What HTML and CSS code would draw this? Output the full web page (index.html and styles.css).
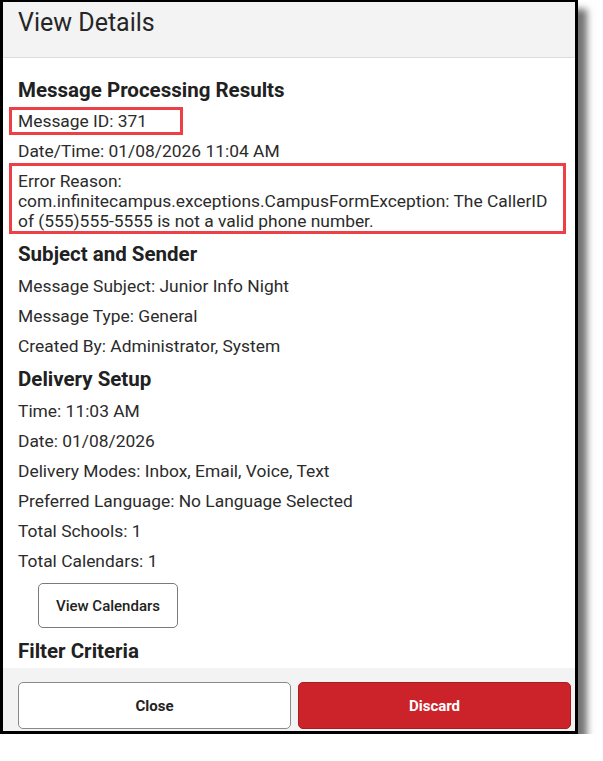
FILE: index.html
```html
<!DOCTYPE html>
<html lang="en">
<head>
<meta charset="utf-8">
<title>View Details</title>
<link rel="stylesheet" href="styles.css">
</head>
<body>
<div class="frame">
  <div class="header"><h1 class="title">View Details</h1></div>
  <div class="content">
    <h2 class="heading h-first">Message Processing Results</h2>
    <div class="mark mark-id"><div class="row">Message ID: 371</div></div>
    <div class="row r-date">Date/Time: 01/08/2026 11:04 AM</div>
    <div class="mark mark-err"><div class="para">Error Reason:<br>com.infinitecampus.exceptions.CampusFormException: The CallerID of (555)555-5555 is not a valid phone number.</div></div>
    <h2 class="heading h-subject">Subject and Sender</h2>
    <div class="row r-first">Message Subject: Junior Info Night</div>
    <div class="row">Message Type: General</div>
    <div class="row">Created By: Administrator, System</div>
    <h2 class="heading h-delivery">Delivery Setup</h2>
    <div class="row r-first2">Time: 11:03 AM</div>
    <div class="row">Date: 01/08/2026</div>
    <div class="row">Delivery Modes: Inbox, Email, Voice, Text</div>
    <div class="row">Preferred Language: No Language Selected</div>
    <div class="row">Total Schools: 1</div>
    <div class="row">Total Calendars: 1</div>
    <button class="btn-outline" type="button">View Calendars</button>
    <h2 class="heading h-filter">Filter Criteria</h2>
  </div>
  <div class="footer">
    <button class="btn btn-close" type="button">Close</button>
    <button class="btn btn-discard" type="button">Discard</button>
  </div>
</div>
</body>
</html>
```

FILE: styles.css
```css
html, body {
  margin: 0;
  padding: 0;
  background: #ffffff;
}

body {
  font-family: Roboto, "Liberation Sans", Arial, sans-serif;
  color: #2b2b2b;
}

.frame {
  width: 578px;
  height: 734px;
  box-sizing: border-box;
  border-style: solid;
  border-color: #000000;
  border-width: 2px 3px 3px 3px;
  display: flex;
  flex-direction: column;
  background: #ffffff;
  box-shadow: 9px 9px 7px rgba(0, 0, 0, 0.55);
  overflow: hidden;
}

.header {
  flex: 0 0 auto;
  height: 56px;
  box-sizing: border-box;
  background: #f3f3f3;
  border-bottom: 1px solid #dcdcdc;
  padding: 6px 15px 0 15px;
}

.title {
  margin: 0;
  font-size: 25px;
  line-height: 30px;
  font-weight: 400;
  color: #262626;
}

.content {
  flex: 1 1 auto;
  overflow: hidden;
  padding: 20px 9px 0 15px;
  display: flex;
  flex-direction: column;
  align-items: flex-start;
  font-size: 17.4px;
  color: #2b2b2b;
}

.heading {
  margin: 0;
  font-size: 20.5px;
  line-height: 24px;
  font-weight: 700;
  color: #212121;
}

.h-subject { margin-top: 8px; }
.h-delivery { margin-top: 11px; }
.h-filter { margin-top: 11px; }

.row {
  line-height: 20px;
  margin-top: 10px;
  white-space: nowrap;
}

.r-first { margin-top: 10px; }
.r-first2 { margin-top: 10px; }
.r-date { margin-top: 6px; }

.mark {
  border: 3px solid #ec4046;
  margin-left: -9px;
  box-sizing: border-box;
}

.mark-id {
  margin-top: 5px;
  width: 174px;
  padding: 1px 6px 1px 6px;
}

.mark-id .row { margin-top: 0; }

.mark-err {
  margin-top: 2px;
  align-self: stretch;
  padding: 5px 6px 0 6px;
}

.para {
  line-height: 20px;
}

.btn-outline {
  margin: 12px 0 0 20px;
  width: 140px;
  height: 45px;
  background: #ffffff;
  border: 1px solid #7a7a7a;
  border-radius: 5px;
  font-family: Roboto, "Liberation Sans", Arial, sans-serif;
  font-size: 15px;
  font-weight: 500;
  color: #222222;
  padding: 0;
}

.footer {
  flex: 0 0 auto;
  height: 63px;
  box-sizing: border-box;
  background: #f3f3f3;
  padding: 14px 4px 0 15px;
  display: grid;
  grid-template-columns: 1fr 1fr;
  column-gap: 7px;
  align-items: start;
}

.btn {
  height: 47px;
  border-radius: 5px;
  font-family: Roboto, "Liberation Sans", Arial, sans-serif;
  font-size: 15px;
  font-weight: 700;
  padding: 0;
}

.btn-close {
  background: #ffffff;
  border: 1px solid #8a8a8a;
  color: #222222;
}

.btn-discard {
  background: #cc2229;
  border: 1px solid #a81c22;
  color: #ffffff;
}
```
